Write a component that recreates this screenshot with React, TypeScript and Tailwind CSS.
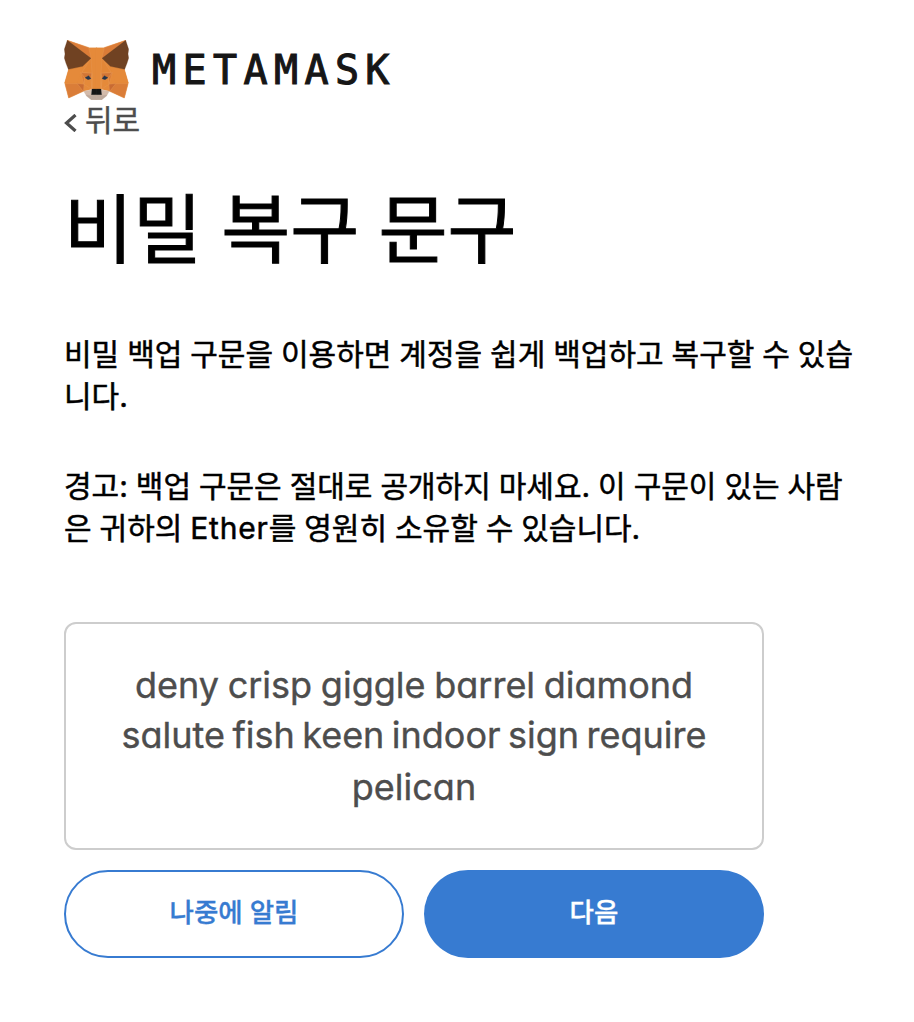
import React from "react";

function Fox() {
  const half = (
    <g strokeWidth="0.8" strokeLinejoin="round">
      <polygon fill="#e58a3a" stroke="#e58a3a" points="34,25 100,47 122.5,47 122.5,172 108,172 82,178 38,198 26,153 38,112" />
      <polygon fill="#db7c37" stroke="#e8a063" points="34,25 98,47 105,79" />
      <polygon fill="#e58a3a" stroke="#e58a3a" points="38,112 82,101 73,124 64,154 26,153" />
      <polygon fill="#da7d38" stroke="#e8a063" points="27,155 64,155 82,178 38,198" />
      <polygon fill="#c96b32" stroke="#dd965e" points="64,155 84,157 82,178" />
      <polygon fill="#e38737" stroke="#e8a063" points="105,79 78,121 108,124" />
      <polygon fill="#d27635" stroke="#e8a063" points="74,122 108,124 104,142 86,137" />
      <polygon fill="#dc7d35" stroke="#e8a063" points="74,122 86,137 84,157" />
      <polygon fill="#e58a3a" stroke="#e8a063" points="86,138 104,142 108,172 84,157" />
      <polygon fill="#704222" stroke="#704222" points="34,25 105,79 80,103 37,112 30,94 25,78 27,66 25,52" />
      <polygon fill="#26364b" stroke="#26364b" points="87,137 98,131 105,140 96,143" />
      <polygon fill="#d3bbab" stroke="#d3bbab" points="83,178 107,173 106,187 122.5,187 122.5,203 106,203 92,193" />
      <polygon fill="#bda99c" stroke="#bda99c" points="90,189 106,191 122.5,190 122.5,203 106,203" />
      <polygon fill="#151515" stroke="#151515" points="108,171 122.5,171 122.5,188 106,188" />
    </g>
  );
  return (
    <svg className="h-[60px] w-[65px] shrink-0" viewBox="24 24 195 180" preserveAspectRatio="none" aria-hidden="true">
      {half}
      <g transform="translate(243 0) scale(-1 1)">{half}</g>
      <path d="M108 124V171M135 124V171" stroke="#eaa163" strokeWidth="1.5" />
    </svg>
  );
}

export default function App() {
  return (
    <main className="h-[1022px] w-[914px] overflow-hidden bg-white px-16 pt-10 font-['Inter','Noto_Sans_CJK_KR',sans-serif] text-black [font-feature-settings:'cv11']">
      <header className="flex h-[60px] items-center gap-[23px]">
        <Fox />
        <span className="font-['DejaVu_Sans_Mono',monospace] text-[40px] leading-[60px] tracking-[6.4px] text-[#161616] [-webkit-text-stroke:1.1px_#161616]">METAMASK</span>
      </header>

      <button className="flex h-10 items-center gap-[7px] text-[#4d4d4d]">
        <svg className="mt-[5px] h-[18px] w-[14px]" viewBox="0 0 14 18" fill="none" stroke="currentColor" strokeWidth="3.2">
          <path d="M11.5 1 2.5 9l9 8" />
        </svg>
        <span className="text-[30px] leading-10 [-webkit-text-stroke:0.4px_#4d4d4d]">뒤로</span>
      </button>

      <h1 className="mt-[34px] h-[112px] whitespace-nowrap text-[75px] leading-[112px] [word-spacing:-1.8px] [-webkit-text-stroke:1px_#000]">비밀 복구 문구</h1>

      <section className="mt-[47px] whitespace-nowrap text-[30px] leading-[42px] [word-spacing:-0.5px] [-webkit-text-stroke:0.5px_#000]">
        <p>
          비밀 백업 구문을 이용하면 계정을 쉽게 백업하고 복구할 수 있습
          <br />
          니다.
        </p>
        <p className="mt-12">
          경고: 백업 구문은 절대로 공개하지 마세요. 이 구문이 있는 사람
          <br />
          은 귀하의 <span className="tracking-[0.8px]">Ether</span>를 영원히 소유할 수 있습니다.
        </p>
      </section>

      <section className="mt-[73px] flex h-[228px] w-[700px] flex-col items-center rounded-[12px] border-2 border-[#cdcdcd] pt-[36px] text-center text-[36px] leading-[51px] text-[#4d4d4d] [-webkit-text-stroke:0.4px_#4d4d4d]">
        <span className="leading-[50px] [word-spacing:-1.4px]">deny crisp giggle barrel diamond</span>
        <span className="leading-[51px] [word-spacing:-2.7px]">salute fish keen indoor sign require</span>
        <span className="pt-px">pelican</span>
      </section>

      <div className="mt-5 flex w-[700px] gap-5 text-[26.5px] font-medium">
        <button className="h-[88px] w-[340px] rounded-full border-2 border-[#377bd1] pb-[3px] text-[#377bd1] [-webkit-text-stroke:0.3px_#377bd1]">나중에 알림</button>
        <button className="h-[88px] w-[340px] rounded-full bg-[#377bd1] pb-[3px] text-white [-webkit-text-stroke:0.3px_#fff]">다음</button>
      </div>
    </main>
  );
}
